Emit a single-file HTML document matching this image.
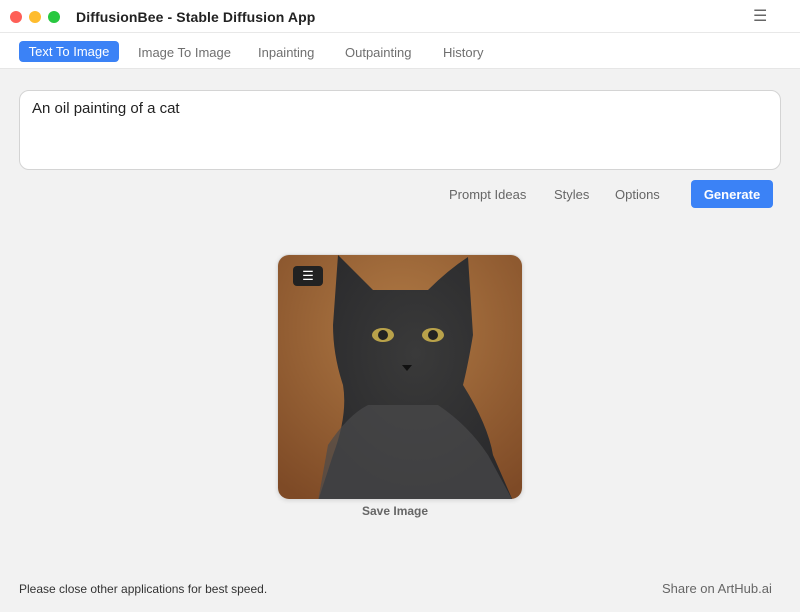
<!DOCTYPE html>
<html><head><style>
*{margin:0;padding:0;box-sizing:border-box}
body{width:800px;height:612px;background:#f2f2f2;font-family:"Liberation Sans",sans-serif;position:relative;overflow:hidden}
.title{position:absolute;left:0;top:0;width:800px;height:33px;background:#fff;border-bottom:1px solid #e8e8e8}
.dot{position:absolute;top:11px;width:12px;height:12px;border-radius:50%}
.tabs{position:absolute;top:33px;left:0;width:800px;height:36px;background:#fff;border-bottom:1px solid #e6e6e6}
.tab{position:absolute;font-size:13px;color:#6f6f6f}
.prompt{position:absolute;left:19px;top:90px;width:762px;height:80px;background:#fff;border:1px solid #d4d4d4;border-radius:10px;font-size:15px;color:#222;padding:9px 12px}
.lnk{position:absolute;top:187px;font-size:13px;color:#666}
</style></head><body>
<div class="title">
<div class="dot" style="left:10px;background:#fe5f57"></div>
<div class="dot" style="left:29px;background:#febc2e"></div>
<div class="dot" style="left:48px;background:#28c840"></div>
<div style="position:absolute;left:76px;top:9px;font-size:14px;font-weight:bold;color:#222;letter-spacing:.1px">DiffusionBee - Stable Diffusion App</div>
<div style="position:absolute;left:753px;top:6px;font-size:16px;color:#666">☰</div>
</div>
<div class="tabs">
<div style="position:absolute;left:19px;top:8px;width:100px;height:21px;background:#3b82f6;border-radius:4px;color:#fff;font-size:13px;text-align:center;line-height:21px">Text To Image</div>
<div class="tab" style="left:138px;top:12px">Image To Image</div>
<div class="tab" style="left:258px;top:12px">Inpainting</div>
<div class="tab" style="left:345px;top:12px">Outpainting</div>
<div class="tab" style="left:443px;top:12px">History</div>
</div>
<div class="prompt">An oil painting of a cat</div>
<div class="lnk" style="left:449px">Prompt Ideas</div>
<div class="lnk" style="left:554px">Styles</div>
<div class="lnk" style="left:615px">Options</div>
<div style="position:absolute;left:691px;top:180px;width:82px;height:28px;background:#3b82f6;border-radius:4px;color:#fff;font-size:13px;font-weight:bold;text-align:center;line-height:29px">Generate</div>
<div style="position:absolute;left:277px;top:254px;width:246px;height:246px;border-radius:12px;border:1px solid #ddd;overflow:hidden;box-shadow:0 1px 4px rgba(0,0,0,.1)">
<svg width="246" height="246" viewBox="0 0 246 246">
<defs><radialGradient id="bg" cx="0.5" cy="0.3" r="0.8"><stop offset="0" stop-color="#b07a45"/><stop offset="1" stop-color="#7e4a26"/></radialGradient>
<radialGradient id="c" cx="0.5" cy="0.4" r="0.6"><stop offset="0" stop-color="#3a3a3a"/><stop offset="1" stop-color="#2a2a2c"/></radialGradient></defs>
<rect width="246" height="246" fill="url(#bg)"/>
<path d="M60 0 Q80 20 95 35 L150 35 Q170 15 190 2 L195 80 Q190 110 185 130 Q210 170 215 200 L235 246 L40 246 L55 200 Q70 160 65 130 Q55 100 55 70 Z" fill="url(#c)"/>
<path d="M40 246 L50 190 Q70 160 90 150 L160 150 Q190 170 210 200 L235 246 Z" fill="#4a4a4c" opacity=".7"/>
<ellipse cx="105" cy="80" rx="11" ry="7" fill="#b9a24a"/><ellipse cx="105" cy="80" rx="5" ry="5" fill="#222"/>
<ellipse cx="155" cy="80" rx="11" ry="7" fill="#b9a24a"/><ellipse cx="155" cy="80" rx="5" ry="5" fill="#222"/>
<path d="M124 110 L134 110 L129 116 Z" fill="#111"/>
</svg>
<div style="position:absolute;left:15px;top:11px;width:30px;height:20px;background:#222;border-radius:4px;color:#fff;font-size:13px;text-align:center;line-height:20px">☰</div>
</div>
<div style="position:absolute;left:362px;top:504px;font-size:12px;color:#666;font-weight:bold">Save Image</div>
<div style="position:absolute;left:19px;top:582px;font-size:12px;color:#333">Please close other applications for best speed.</div>
<div style="position:absolute;left:662px;top:581px;font-size:13px;color:#666">Share on ArtHub.ai</div>
</body></html>
